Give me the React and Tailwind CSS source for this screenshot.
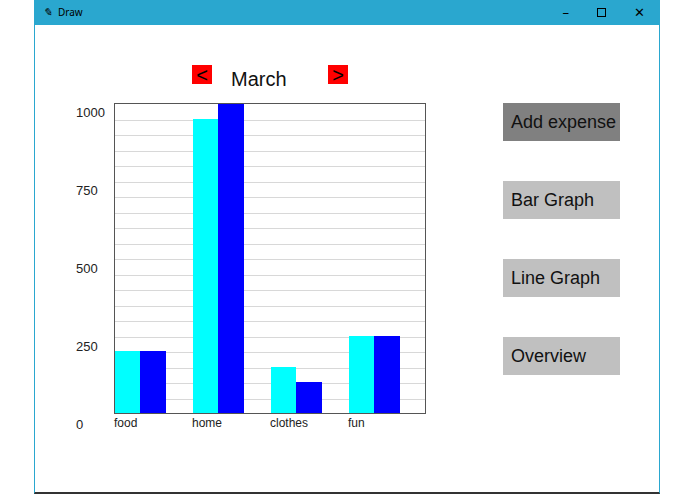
export default function App() {
  const groups = [
    { l: "food", a: 200, b: 200 },
    { l: "home", a: 950, b: 1000 },
    { l: "clothes", a: 150, b: 100 },
    { l: "fun", a: 250, b: 250 },
  ];
  const f = { fontFamily: '"Liberation Sans", Arial, sans-serif' };
  return (
    <div className="w-[695px] h-[494px] bg-white relative overflow-hidden" style={f}>
      <div className="absolute left-[34px] top-0 w-[626px] h-[494px] border-l border-r border-b-2 border-[#2aa7cf] border-b-[#333]">
        <div className="h-[25px] bg-[#2aa7cf] flex items-center text-[10px] text-black" style={{ fontFamily: '"Noto Sans", sans-serif' }}>
          <span className="ml-[8px] mr-[6px] text-[11px] italic">✎</span>
          <span>Draw</span>
          <div className="ml-auto flex items-center gap-[28px] mr-[14px] text-[13px]">
            <span>–</span>
            <span className="w-[9px] h-[9px] border border-black" />
            <span>✕</span>
          </div>
        </div>
        <div className="relative h-[467px] bg-white">
          {/* nav */}
          <div className="absolute left-[157px] top-[40px] w-[20px] h-[19px] bg-[#ff0000] flex items-center justify-center text-[20px] leading-none">&lt;</div>
          <div className="absolute left-[196px] top-[39px] text-[20px] text-[#111]">March</div>
          <div className="absolute left-[293px] top-[40px] w-[20px] h-[19px] bg-[#ff0000] flex items-center justify-center text-[20px] leading-none">&gt;</div>
          {/* y labels */}
          {[["1000", 78], ["750", 156], ["500", 234], ["250", 312], ["0", 390]].map(([t, y]) => (
            <div key={t} className="absolute left-[41px] text-[13px] text-[#222]" style={{ top: y }}>{t}</div>
          ))}
          {/* chart */}
          <div className="absolute left-[79px] top-[78px] w-[312px] h-[311px] border border-[#555] bg-white overflow-hidden">
            {Array.from({ length: 19 }).map((_, i) => (
              <div key={i} className="absolute left-0 right-0 h-px bg-[#d8d8d8]" style={{ top: (i + 1) * 15.5 }} />
            ))}
            {groups.map((g, i) => (
              <div key={g.l}>
                <div className="absolute bottom-0 w-[25px] bg-[#00ffff]" style={{ left: i * 78, height: g.a * 0.31 }} />
                <div className="absolute bottom-0 w-[26px] bg-[#0000ff]" style={{ left: i * 78 + 25, height: g.b * 0.31 }} />
              </div>
            ))}
          </div>
          {groups.map((g, i) => (
            <div key={g.l} className="absolute top-[389px] text-[12px] text-[#222]" style={{ left: 79 + i * 78 }}>{g.l}</div>
          ))}
          {/* buttons */}
          <div className="absolute left-[468px] top-[78px] flex flex-col gap-[40px]">
            {["Add expense", "Bar Graph", "Line Graph", "Overview"].map((t, i) => (
              <div key={t} className={`w-[117px] h-[38px] flex items-center pl-[8px] text-[18px] text-[#111] whitespace-nowrap overflow-hidden ${i === 0 ? "bg-[#808080]" : "bg-[#c0c0c0]"}`}>{t}</div>
            ))}
          </div>
        </div>
      </div>
    </div>
  );
}
